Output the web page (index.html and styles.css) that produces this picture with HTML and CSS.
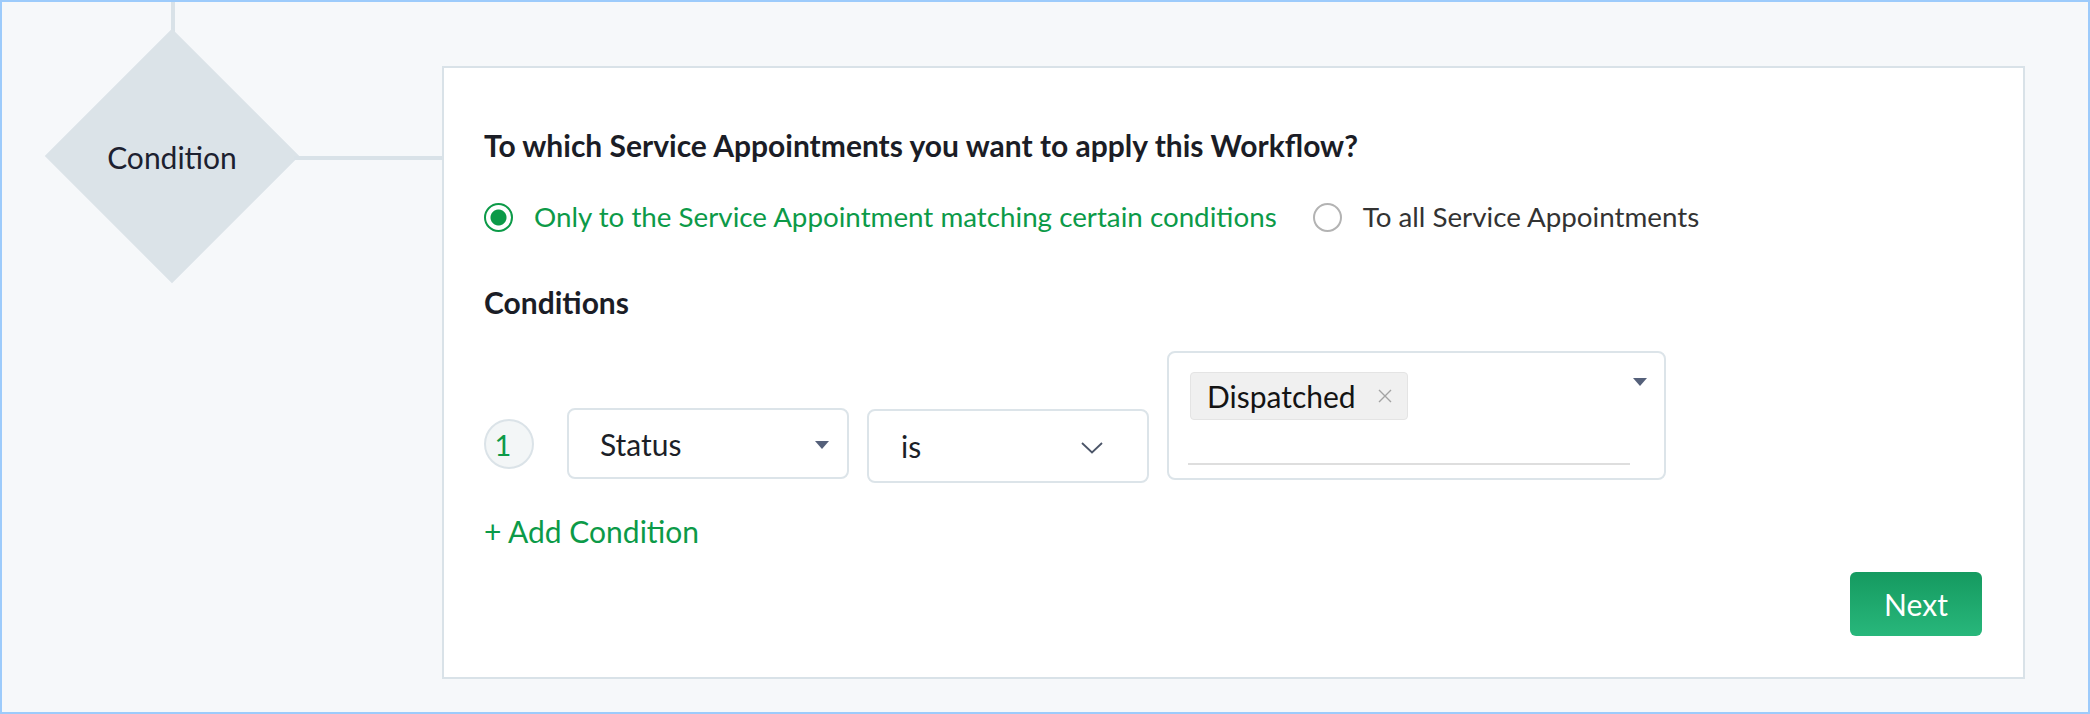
FILE: index.html
```html
<!DOCTYPE html>
<html lang="en">
<head>
<meta charset="utf-8">
<title>Workflow Condition</title>
<link rel="stylesheet" href="styles.css">
</head>
<body>
<div class="frame">
  <div class="canvas">
    <div class="stem"></div>
    <div class="diamond"><span class="diamond-label">Condition</span></div>
    <div class="link"></div>
  </div>
  <div class="card">
    <h2 class="title">To which Service Appointments you want to apply this Workflow?</h2>
    <div class="radios">
      <label class="radio radio-on"><span class="radio-dot"></span><span>Only to the Service Appointment matching certain conditions</span></label>
      <label class="radio radio-off"><span class="radio-dot"></span><span>To all Service Appointments</span></label>
    </div>
    <h3 class="subtitle">Conditions</h3>
    <div class="cond-row">
      <span class="num">1</span>
      <div class="select select-field">
        <span>Status</span>
        <span class="caret"></span>
      </div>
      <div class="select select-op">
        <span>is</span>
        <svg class="chevron" width="22" height="12" viewBox="0 0 22 12"><polyline points="1,1 11,10.5 21,1" fill="none" stroke="#4b5568" stroke-width="1.8"/></svg>
      </div>
      <div class="multi">
        <div class="multi-main">
          <div class="chips">
            <span class="chip">Dispatched<svg class="chip-x" width="14" height="14" viewBox="0 0 14 14"><path d="M1 1 L13 13 M13 1 L1 13" stroke="#a3a3a3" stroke-width="1.4" fill="none"/></svg></span>
          </div>
          <div class="multi-line"></div>
        </div>
        <span class="caret caret-multi"></span>
      </div>
    </div>
    <a class="add" href="#">+ Add Condition</a>
    <div class="actions"><button class="next" type="button">Next</button></div>
  </div>
</div>
</body>
</html>
```
FILE: styles.css
```css
* { box-sizing: border-box; }
html, body { margin: 0; padding: 0; }
body {
  font-family: Lato, "Noto Sans", "Liberation Sans", sans-serif;
  background: #f6f8fa;
}
.frame {
  width: 2090px;
  height: 714px;
  border: 2px solid #9dcbfb;
  background: #f6f8fa;
  display: flex;
  align-items: flex-start;
}
.canvas {
  position: relative;
  width: 440px;
  height: 100%;
  flex-shrink: 0;
}
.stem {
  position: absolute;
  left: 169px;
  top: 0;
  width: 4px;
  height: 30px;
  background: #d9e2e8;
}
.link {
  position: absolute;
  left: 292px;
  top: 154px;
  width: 148px;
  height: 4px;
  background: #d9e2e8;
}
.diamond {
  position: absolute;
  left: 80px;
  top: 64px;
  width: 180px;
  height: 180px;
  display: flex;
  align-items: center;
  justify-content: center;
}
.diamond::before {
  content: "";
  position: absolute;
  inset: 0;
  background: #dbe3e8;
  transform: rotate(45deg);
}
.diamond-label {
  position: relative;
  font-size: 30px;
  line-height: 36px;
  color: #1c2130;
  margin-top: 2px;
}
.card {
  width: 1583px;
  height: 613px;
  margin-top: 64px;
  background: #fff;
  border: 2px solid #d9e2e8;
  padding: 59px 41px 41px 40px;
  display: flex;
  flex-direction: column;
}
.title {
  margin: 0;
  font-size: 30px;
  line-height: 36px;
  font-weight: 700;
  color: #1b1d26;
}
.radios {
  margin-top: 37px;
  height: 34px;
  display: flex;
  align-items: center;
}
.radio {
  display: flex;
  align-items: center;
  gap: 21px;
  font-size: 27.75px;
  line-height: 34px;
}
.radio-on { color: #0c9a48; }
.radio-off { color: #333; margin-left: 36px; }
.radio-dot {
  width: 29px;
  height: 29px;
  border-radius: 50%;
  border: 2px solid #b3b3b3;
  flex-shrink: 0;
  background: #fff;
}
.radio-on .radio-dot {
  border-color: #0c9a48;
  background: radial-gradient(circle, #0c9a48 0 7.5px, #fff 8.5px);
}
.subtitle {
  margin: 50px 0 0;
  font-size: 30px;
  line-height: 36px;
  font-weight: 700;
  color: #1b1d26;
}
.cond-row {
  margin-top: 31px;
  display: flex;
  align-items: flex-start;
}
.num {
  width: 50px;
  height: 50px;
  margin-top: 68px;
  border-radius: 50%;
  border: 2px solid #dbe3e8;
  background: #f3f6f7;
  color: #0c9a48;
  font-size: 29px;
  display: flex;
  align-items: center;
  justify-content: center;
  padding-right: 12px;
  flex-shrink: 0;
}
.select {
  width: 282px;
  border: 2px solid #dce4e9;
  border-radius: 8px;
  background: #fff;
  display: flex;
  align-items: center;
  justify-content: space-between;
  font-size: 30px;
  color: #1c1f28;
}
.select-field {
  height: 71px;
  margin-top: 57px;
  margin-left: 33px;
  padding: 0 18px 0 31px;
}
.select-op {
  height: 74px;
  margin-top: 58px;
  margin-left: 18px;
  padding: 0 44px 0 32px;
}
.chevron { margin-top: 4px; }
.caret {
  width: 0;
  height: 0;
  border-left: 7px solid transparent;
  border-right: 7px solid transparent;
  border-top: 8px solid #55607a;
  margin-top: 2px;
}
.multi {
  width: 499px;
  height: 129px;
  margin-left: 18px;
  border: 2px solid #dce4e9;
  border-radius: 8px;
  background: #fff;
  display: flex;
  align-items: flex-start;
  padding: 19px 17px 13px 19px;
}
.multi-main {
  flex: 1;
  display: flex;
  flex-direction: column;
}
.chips { display: flex; }
.chip {
  margin-left: 2px;
  height: 48px;
  display: inline-flex;
  align-items: center;
  gap: 22px;
  padding: 0 15px 0 16px;
  background: #f0f0f0;
  border: 1px solid #e4e4e4;
  border-radius: 4px;
  font-size: 30px;
  color: #141414;
}
.multi-line {
  margin-top: 43px;
  height: 2px;
  background: #dedede;
}
.caret-multi {
  margin-left: 3px;
  margin-top: 6px;
}
.add {
  margin-top: 30px;
  align-self: flex-start;
  font-size: 30px;
  line-height: 36px;
  color: #0c9a48;
  text-decoration: none;
}
.actions {
  margin-top: 23px;
  display: flex;
  justify-content: flex-end;
}
.next {
  width: 132px;
  height: 64px;
  border: 0;
  border-radius: 6px;
  background: linear-gradient(#159a60, #28b77b);
  color: #fff;
  font-family: Lato, "Noto Sans", sans-serif;
  font-size: 30px;
  padding: 0;
}
```
